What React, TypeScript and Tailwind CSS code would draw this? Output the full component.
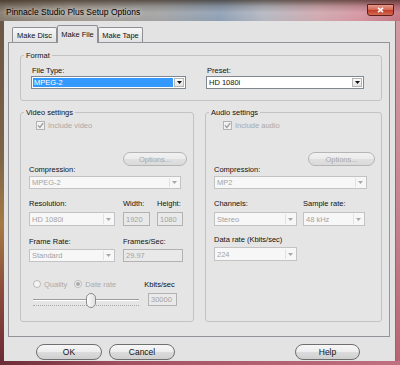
import React from "react";

function Arrow({ color }: { color: string }) {
  return (
    <svg width="5" height="3" viewBox="0 0 5 3">
      <path d="M0 0H5L2.5 3Z" fill={color} />
    </svg>
  );
}

function Combo({
  value,
  className,
  disabled,
  focused,
}: {
  value: string;
  className: string;
  disabled?: boolean;
  focused?: boolean;
}) {
  if (disabled) {
    return (
      <div className={`flex border border-[#c3c3c3] bg-[#f7f7f7] p-px ${className}`}>
        <div className="flex-1 flex items-center pl-[1px] text-[#a3a3a3]">{value}</div>
        <div className="w-[10px] flex items-center justify-center border-l border-[#e2e2e2]">
          <Arrow color="#a8a8a8" />
        </div>
      </div>
    );
  }
  return (
    <div className={`flex border border-[#7f8790] bg-white p-px ${className}`}>
      <div
        className={`flex-1 flex items-center pl-[1px] mr-px ${
          focused ? "bg-[#3399ff] text-white" : "text-[#111]"
        }`}
      >
        {value}
      </div>
      <div className="w-[10px] flex items-center justify-center border border-[#b5b5b5] bg-[linear-gradient(#fbfbfb,#e3e3e3)]">
        <Arrow color="#111" />
      </div>
    </div>
  );
}

function Box({ value, className }: { value: string; className: string }) {
  return (
    <div
      className={`flex items-center border border-[#b2b2b2] bg-[#e9e9e9] pl-[2px] text-[#a3a3a3] ${className}`}
    >
      {value}
    </div>
  );
}

function Check({ label, className }: { label: string; className: string }) {
  return (
    <div className={`flex items-center h-[9px] ${className}`}>
      <span className="w-[9px] h-[9px] border border-[#b3b3b3] bg-[#f1f1f1] flex items-center justify-center">
        <svg width="7" height="7" viewBox="0 0 7 7">
          <path d="M1 3.4L2.9 5.5L6.2 1.2" stroke="#9b9b9b" strokeWidth="1.3" fill="none" />
        </svg>
      </span>
      <span className="ml-[3px] text-[#a9a9a9]">{label}</span>
    </div>
  );
}

function Radio({ label, on }: { label: string; on?: boolean }) {
  return (
    <div className="flex items-center">
      <span className="w-[8px] h-[8px] rounded-full border border-[#b9b9b9] bg-[#f4f4f4] flex items-center justify-center">
        {on && <span className="w-[4px] h-[4px] rounded-full bg-[#a9a9a9]" />}
      </span>
      <span className="ml-[3px] text-[#ababab]">{label}</span>
    </div>
  );
}

function PillButton({
  label,
  className,
  disabled,
}: {
  label: string;
  className: string;
  disabled?: boolean;
}) {
  return (
    <div
      className={`flex items-center justify-center rounded-[8px] border ${
        disabled
          ? "border-[#b5b5b5] bg-[linear-gradient(#f1f1f1_0%,#ebebeb_50%,#e0e0e0_51%,#dadada_100%)] text-[#a7a7a7]"
          : "border-[#6f6f6f] bg-[linear-gradient(#f7f7f7_0%,#ececec_50%,#dcdcdc_51%,#cfcfcf_100%)] text-[#111]"
      } ${className}`}
    >
      {label}
    </div>
  );
}

function Group({
  title,
  className,
  children,
}: {
  title: string;
  className: string;
  children: React.ReactNode;
}) {
  return (
    <fieldset className={`border border-[#c3c3c3] rounded-[3px] px-[3px] ${className}`}>
      <legend className="px-[2px] leading-[9px] text-[#111]">{title}</legend>
      {children}
    </fieldset>
  );
}

export default function App() {
  return (
    <div className="w-[400px] h-[365px] overflow-hidden flex flex-col font-['Liberation_Sans',Arial,sans-serif] text-[7.5px] leading-[9px] text-[#111]">
      {/* Title bar */}
      <div className="h-[21px] flex items-start justify-between pl-[6px] pr-[6px] bg-[linear-gradient(to_bottom,rgba(40,25,12,0.6)_0%,rgba(40,25,12,0.15)_30%,rgba(255,255,255,0.08)_60%,rgba(0,0,0,0)_100%),linear-gradient(to_right,#84796c_0%,#a39b92_18%,#a2a3a4_40%,#8e9fb4_55%,#b4b7c0_66%,#d0a7ae_80%,#d494a0_90%,#c27582_100%)]">
        <span className="mt-[7px] text-[8.5px] leading-[10px] text-black [text-shadow:0_0_5px_rgba(255,255,255,0.9)]">
          Pinnacle Studio Plus Setup Options
        </span>
        <div className="mt-[4px] w-[27px] h-[12px] rounded-b-[3px] border border-[#5e1f1a] bg-[linear-gradient(#e49a8c_0%,#d66a58_45%,#c0402c_55%,#d66a50_100%)] flex items-center justify-center">
          <svg width="7" height="6" viewBox="0 0 7 6">
            <path d="M1 0.8L6 5.2M6 0.8L1 5.2" stroke="white" strokeWidth="1.6" />
          </svg>
        </div>
      </div>

      <div className="flex h-[340px]">
        <div className="w-[4px] bg-[linear-gradient(to_bottom,#6a5646_0%,#7d6448_40%,#a57a44_60%,#8a4a3c_80%,#6c2c36_100%)]" />
        <div className="flex-1 flex flex-col bg-[#e3e3e3] pt-[4px] pl-[4px] pr-[5px]">
          {/* Tabs */}
          <div className="flex items-end h-[17px] pl-[4px]">
            <div className="w-[45px] h-[15px] flex items-center justify-center border border-b-0 border-[#8e8f94] rounded-t-[2px] bg-[linear-gradient(#f6f6f6,#e2e2e2)]">
              Make Disc
            </div>
            <div className="relative z-10 w-[41px] h-[18px] -mb-px flex items-start justify-center pt-[4px] border border-b-0 border-[#8e8f94] rounded-t-[2px] bg-[#e5e5e5]">
              Make File
            </div>
            <div className="w-[45px] h-[15px] flex items-center justify-center border border-b-0 border-[#8e8f94] rounded-t-[2px] bg-[linear-gradient(#f6f6f6,#e2e2e2)]">
              Make Tape
            </div>
          </div>

          {/* Panel */}
          <div className="h-[295px] border border-[#939499] bg-[#e5e5e5] pl-[11px] pr-[7px] pt-[8px] flex flex-col">
            <Group title="Format" className="w-[362px]">
              <div className="flex ml-[7px] mt-[6px] pb-[11px]">
                <div className="w-[155px] flex flex-col">
                  <span className="ml-[1px]">File Type:</span>
                  <Combo value="MPEG-2" focused className="mt-[1px] h-[13px] w-[155px]" />
                </div>
                <div className="w-[158px] ml-[20px] flex flex-col">
                  <span className="ml-[1px]">Preset:</span>
                  <Combo value="HD 1080i" className="mt-[1px] h-[13px] w-[158px]" />
                </div>
              </div>
            </Group>

            <div className="flex mt-[7px] gap-[11px]">
              {/* Video */}
              <Group title="Video settings" className="w-[174px]">
                <div className="flex flex-col pb-[13px]">
                  <Check label="Include video" className="mt-[4px] ml-[12px]" />
                  <PillButton label="Options..." disabled className="self-end mr-[3px] mt-[22px] w-[64px] h-[14px]" />
                  <span className="ml-[5px] mt-[-1px]">Compression:</span>
                  <Combo value="MPEG-2" disabled className="ml-[5px] mt-[2px] w-[152px] h-[13px]" />

                  <div className="flex ml-[5px] mt-[10px]">
                    <span className="w-[94px]">Resolution:</span>
                    <span className="w-[34px]">Width:</span>
                    <span>Height:</span>
                  </div>
                  <div className="flex ml-[5px] mt-[4px] h-[14px]">
                    <Combo value="HD 1080i" disabled className="w-[86px]" />
                    <Box value="1920" className="ml-[8px] w-[27px]" />
                    <Box value="1080" className="ml-[7px] w-[26px]" />
                  </div>

                  <div className="flex ml-[5px] mt-[11px]">
                    <span className="w-[94px]">Frame Rate:</span>
                    <span>Frames/Sec:</span>
                  </div>
                  <div className="flex ml-[5px] mt-[3px] h-[13px]">
                    <Combo value="Standard" disabled className="w-[86px]" />
                    <Box value="29.97" className="ml-[8px] w-[60px]" />
                  </div>

                  <div className="flex items-center ml-[9px] mt-[17px]">
                    <Radio label="Quality" />
                    <div className="ml-[7px]">
                      <Radio label="Date rate" on />
                    </div>
                    <span className="ml-[28px] mt-[1px]">Kbits/sec</span>
                  </div>
                  <div className="flex ml-[9px] mt-[4px] h-[15px]">
                    <div className="relative w-[106px] h-[15px]">
                      <div className="absolute left-0 right-0 top-[6px] h-[2px] border-t border-[#9c9c9c] border-b border-b-white" />
                      <div className="absolute left-0 right-0 top-[12px] h-0 border-t border-dotted border-[#a8a8a8]" />
                      <div className="absolute left-[53px] top-0 w-[10px] h-[15px] rounded-[5px] border border-[#8d8d8d] bg-[linear-gradient(to_right,#fbfbfb,#e0e0e0)]" />
                    </div>
                    <Box value="30000" className="ml-[9px] w-[29px] h-[13px]" />
                  </div>
                </div>
              </Group>

              {/* Audio */}
              <Group title="Audio settings" className="w-[177px]">
                <div className="flex flex-col">
                  <Check label="Include audio" className="mt-[4px] ml-[14px]" />
                  <PillButton label="Options..." disabled className="self-end mr-[3px] mt-[22px] w-[67px] h-[14px]" />
                  <span className="ml-[5px] mt-[-1px]">Compression:</span>
                  <Combo value="MP2" disabled className="ml-[5px] mt-[2px] w-[153px] h-[13px]" />

                  <div className="flex ml-[5px] mt-[10px]">
                    <span className="w-[89px]">Channels:</span>
                    <span>Sample rate:</span>
                  </div>
                  <div className="flex ml-[5px] mt-[4px] h-[14px]">
                    <Combo value="Stereo" disabled className="w-[83px]" />
                    <Combo value="48 kHz" disabled className="ml-[6px] w-[62px]" />
                  </div>

                  <span className="ml-[5px] mt-[9px]">Data rate (Kbits/sec)</span>
                  <div className="flex ml-[5px] mt-[3px] h-[14px]">
                    <Combo value="224" disabled className="w-[83px]" />
                  </div>
                </div>
              </Group>
            </div>
          </div>

          {/* Bottom buttons */}
          <div className="flex mt-[7px] h-[16px]">
            <PillButton label="OK" className="ml-[28px] w-[66px] h-[16px] text-[8.5px]" />
            <PillButton label="Cancel" className="ml-[7px] w-[66px] h-[16px] text-[8.5px]" />
            <PillButton label="Help" className="ml-auto mr-[30px] w-[65px] h-[16px] text-[8.5px]" />
          </div>
        </div>
        <div className="w-[5px] border-l border-[#8a6a70] bg-[linear-gradient(to_bottom,#d39aa4_0%,#c98692_50%,#b86474_100%)]" />
      </div>
      <div className="h-[4px] bg-[linear-gradient(to_right,#6c2c36_0%,#a05060_30%,#c07080_100%)]" />
    </div>
  );
}
